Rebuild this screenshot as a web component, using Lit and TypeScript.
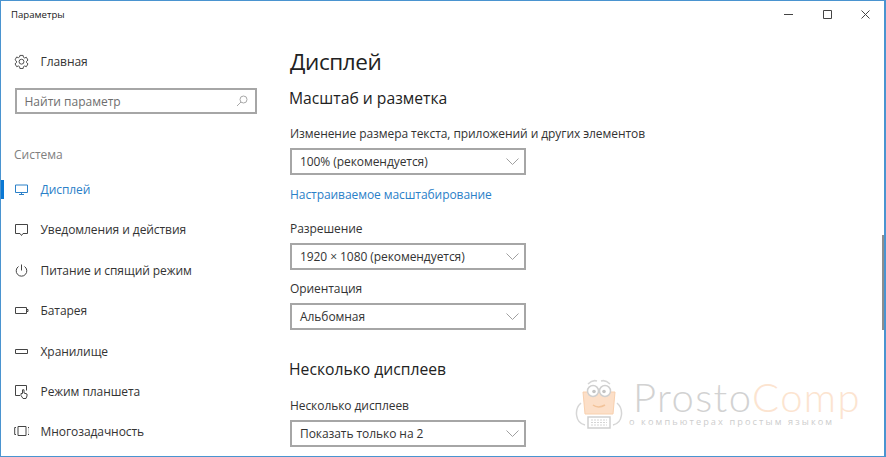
import { LitElement, html, css, svg } from 'lit';
import { customElement } from 'lit/decorators.js';

const icons: Record<string, unknown> = {
  gear: svg`<path d="M6.300 1.500h3.400l.4 2 1.200.7 1.900-.7 1.700 3-1.500 1.300v1.400l1.500 1.300-1.700 3-1.900-.7-1.200.7-.4 2H6.300l-.4-2-1.200-.7-1.900.7-1.700-3 1.500-1.300V7.500L1.100 6.200l1.700-3 1.900.7 1.200-.7z"/><circle cx="8" cy="8.200" r="2.600"/>`,
  display: svg`<path d="M1.500 3h12v7.500h-12zM7.500 10.500v2M5 12.500h5"/>`,
  notify: svg`<path d="M1.500 2.500h12v9H9l-1.500 2L6 11.500H1.500z"/>`,
  power: svg`<path d="M7.500 1.500v6M4.500 3.500a5.300 5.300 0 1 0 6 0"/>`,
  battery: svg`<path d="M1.500 4.500h11v6h-11zM12.500 6.500h1.500v2h-1.500"/>`,
  storage: svg`<path d="M1.500 5.500h12v4h-12z"/>`,
  tablet: svg`<path d="M6 11.500H1.500v-10h11v5M9 14.500l-2-3V9.500h1.500V5.800h1.500v3.200l3 1v2l-1 2.500z"/>`,
  multi: svg`<path d="M4 2.500h8v9H4zM2 3.500H.7v7H2M14 3.500h1.300v7H14"/>`,
};

const navItems = [
  { icon: 'display', label: 'Дисплей', active: true },
  { icon: 'notify', label: 'Уведомления и действия' },
  { icon: 'power', label: 'Питание и спящий режим' },
  { icon: 'battery', label: 'Батарея' },
  { icon: 'storage', label: 'Хранилище' },
  { icon: 'tablet', label: 'Режим планшета' },
  { icon: 'multi', label: 'Многозадачность' },
];

@customElement('app-root')
export class AppRoot extends LitElement {
  static styles = css`
    :host {
      display: block;
      width: 886px;
      height: 457px;
      overflow: hidden;
      font-family: 'Open Sans', 'Noto Sans', sans-serif;
      color: #222;
    }

    .window {
      position: relative;
      box-sizing: border-box;
      width: 886px;
      height: 457px;
      background: #fff;
      border: 1px solid #4a94d0;
      border-left-width: 1.500px;
      border-right-width: 2px;
      display: flex;
      flex-direction: column;
      overflow: hidden;
    }

    .titlebar {
      height: 26px;
      margin-bottom: 2px;
      flex: none;
      display: flex;
      align-items: center;
      justify-content: space-between;
      padding-left: 10px;
      font-size: 9.600px;
      color: #222;
    }

    .controls {
      display: flex;
      margin-right: -1px;
    }

    .controls span {
      width: 38.500px;
      height: 26px;
      display: flex;
      align-items: center;
      justify-content: center;
    }

    .controls svg {
      width: 9px;
      height: 9px;
      fill: none;
      stroke: #444;
      stroke-width: 1;
    }

    .body {
      flex: 1;
      display: flex;
      min-height: 0;
    }

    .sidebar {
      width: 278px;
      flex: none;
    }

    .home {
      margin-top: 12px;
      height: 40px;
    }

    .row {
      position: relative;
      height: 40.400px;
      display: flex;
      align-items: center;
      padding-left: 13px;
      font-size: 12px;
      letter-spacing: -0.070px;
      color: #333;
    }

    .row svg {
      width: 15px;
      height: 15px;
      fill: none;
      stroke: #444;
      stroke-width: 1;
      margin-right: 11.500px;
      flex: none;
    }

    .row.active {
      color: #2a80c8;
    }

    .row.active svg {
      stroke: #2a80c8;
    }

    .row.active::before {
      content: '';
      position: absolute;
      left: 0;
      top: 11px;
      width: 3px;
      height: 19px;
      background: #0a78d4;
    }

    .search {
      box-sizing: border-box;
      margin: 7px 0 0 13.500px;
      width: 242px;
      height: 26px;
      border: 2px solid #a6a6a6;
      display: flex;
      align-items: center;
      justify-content: space-between;
      padding: 0 7px 0 8px;
      font-size: 12px;
      color: #6e6e6e;
    }

    .search svg {
      width: 12px;
      height: 12px;
      fill: none;
      stroke: #a8a8a8;
      stroke-width: 1;
    }

    .group {
      margin: 32px 0 6px 13px;
      font-size: 12px;
      line-height: 17px;
      color: #808080;
    }

    .main {
      flex: 1;
      padding-left: 11px;
    }

    h1 {
      margin: 17px 0 0;
      font-size: 22.500px;
      line-height: 32px;
      letter-spacing: -0.400px;
      font-weight: 400;
      color: #222;
    }

    h2 {
      margin: 9px 0 0 -1px;
      font-size: 15.700px;
      line-height: 22px;
      font-weight: 400;
      color: #222;
    }

    h2.second {
      margin-top: 28px;
    }

    .label {
      font-size: 12px;
      letter-spacing: -0.070px;
      line-height: 17px;
      color: #333;
      margin-top: 16px;
    }

    .label.after-link {
      margin-top: 17px;
    }

    .label.tight {
      margin-top: 10px;
    }

    .label.sub {
      margin-top: 17px;
    }

    .select {
      box-sizing: border-box;
      width: 236px;
      height: 27px;
      margin-top: 6px;
      border: 2px solid #a6a6a6;
      display: flex;
      align-items: center;
      justify-content: space-between;
      padding: 0 5px 0 8px;
      font-size: 12px;
      letter-spacing: -0.070px;
      color: #333;
    }

    .select svg {
      width: 13px;
      height: 7px;
      fill: none;
      stroke: #a0a0a0;
      stroke-width: 1;
    }

    .link {
      margin-top: 11px;
      font-size: 12px;
      letter-spacing: -0.070px;
      line-height: 17px;
      color: #2a80c8;
    }

    .scrollbar {
      position: absolute;
      right: 0;
      top: 234px;
      width: 2px;
      height: 95px;
      background: #8e8e8e;
    }

    .mark {
      position: absolute;
      left: 574px;
      top: 378px;
      display: flex;
      align-items: flex-start;
      gap: 6px;
      pointer-events: none;
    }

    .mark svg {
      width: 52px;
      height: 54px;
      flex: none;
    }

    .brand {
      font-family: 'Lato', sans-serif;
      font-weight: 300;
      font-size: 40px;
      line-height: 36px;
      letter-spacing: 1.400px;
      color: #d2d2d2;
      white-space: nowrap;
    }

    .brand span {
      color: #fce4d0;
    }

    .tag {
      margin: 1px 0 0 -4px;
      font-size: 9.200px;
      line-height: 12px;
      letter-spacing: 2.100px;
      color: #cdcdcd;
      white-space: nowrap;
    }
  `;

  private select(value: string) {
    return html`<div class="select">
      <span>${value}</span>
      <svg viewBox="0 0 13 7"><path d="M.5.500l6 6 6-6" /></svg>
    </div>`;
  }

  render() {
    return html`
      <div class="window">
        <div class="titlebar">
          <span>Параметры</span>
          <div class="controls">
            <span><svg viewBox="0 0 9 9"><path d="M0 4.500h9" /></svg></span>
            <span><svg viewBox="0 0 9 9"><path d="M.5.500h8v8h-8z" /></svg></span>
            <span><svg viewBox="0 0 9 9"><path d="M.5.500l8 8M8.500.500l-8 8" /></svg></span>
          </div>
        </div>
        <div class="body">
          <nav class="sidebar">
            <div class="row home">
              <svg viewBox="0 0 16 16">${icons.gear}</svg>
              <span>Главная</span>
            </div>
            <div class="search">
              <span>Найти параметр</span>
              <svg viewBox="0 0 12 12"><circle cx="7.500" cy="4.500" r="3.500" /><path d="M5 7L1 11" /></svg>
            </div>
            <div class="group">Система</div>
            ${navItems.map(
              (item) => html`<div class="row ${item.active ? 'active' : ''}">
                <svg viewBox="0 0 15 15">${icons[item.icon]}</svg>
                <span>${item.label}</span>
              </div>`
            )}
          </nav>
          <main class="main">
            <h1>Дисплей</h1>
            <h2>Масштаб и разметка</h2>
            <div class="label">Изменение размера текста, приложений и других элементов</div>
            ${this.select('100% (рекомендуется)')}
            <div class="link">Настраиваемое масштабирование</div>
            <div class="label after-link">Разрешение</div>
            ${this.select('1920 × 1080 (рекомендуется)')}
            <div class="label tight">Ориентация</div>
            ${this.select('Альбомная')}
            <h2 class="second">Несколько дисплеев</h2>
            <div class="label sub">Несколько дисплеев</div>
            ${this.select('Показать только на 2')}
          </main>
        </div>
        <div class="scrollbar"></div>
        <div class="mark">
          <svg viewBox="0 0 52 54">
            <path d="M8 13h32l-2 22H10z" fill="#fcdfc8" stroke="#f8d0ae" />
            <path d="M6 24C-1 30 0 44 10 46M42 24c7 6 6 20-4 22" fill="none" stroke="#d6d6d6" stroke-width="1.500" />
            <path d="M13 5c3-3 6-4 9-3M35 5c-3-3-6-4-9-3" fill="none" stroke="#d6d6d6" stroke-width="1.500" />
            <circle cx="18" cy="12" r="5.500" fill="#fff" stroke="#cfcfcf" stroke-width="1.500" />
            <circle cx="30" cy="12" r="5.500" fill="#fff" stroke="#cfcfcf" stroke-width="1.500" />
            <circle cx="19" cy="12.500" r="1.800" fill="#c4c4c4" />
            <circle cx="29" cy="12.500" r="1.800" fill="#c4c4c4" />
            <path d="M18 26c3 2.500 8 2.500 12 0" fill="none" stroke="#f2c39a" stroke-width="1.500" />
            <path d="M13 38h22v11H13z" fill="#fff" stroke="#cfcfcf" stroke-width="1.500" />
            <path d="M16 41h16M16 43.500h16M16 46h16" stroke="#d4d4d4" stroke-dasharray="2 1" />
          </svg>
          <div>
            <div class="brand">Prosto<span>Comp</span></div>
            <div class="tag">о компьютерах простым языком</div>
          </div>
        </div>
      </div>
    `;
  }
}
